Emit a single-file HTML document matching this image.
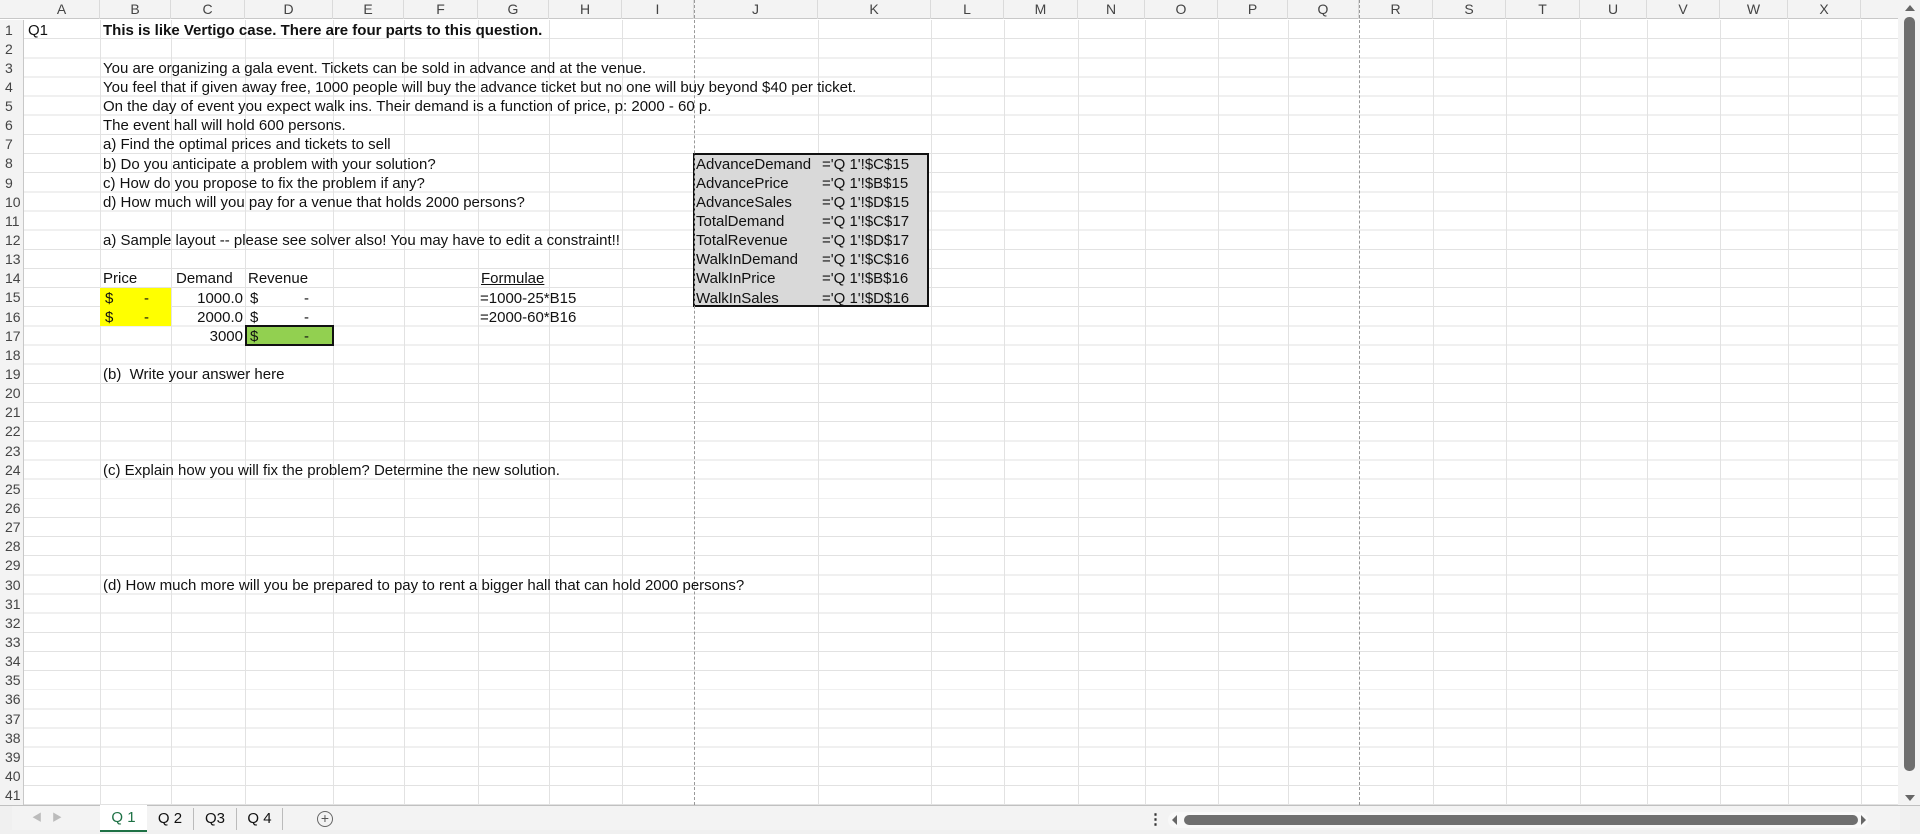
<!DOCTYPE html>
<html><head><meta charset="utf-8"><style>
*{margin:0;padding:0;box-sizing:border-box}
body{width:1920px;height:834px;overflow:hidden;background:#fff;font-family:"Liberation Sans","Noto Sans CJK SC",sans-serif;font-size:15px;color:#111;position:relative}
.hdr{position:absolute;top:0;left:0;width:1898px;height:19px;background:#f3f3f3;border-bottom:1px solid #c8c8c8}
.ch{position:absolute;top:0;height:19px;line-height:19px;text-align:center;color:#444;font-size:14px;border-right:1px solid #dadada}
.rh{position:absolute;left:0;width:24px;background:#f3f3f3;border-right:1px solid #c8c8c8;top:19.5px;height:785.2px}
.rh div{height:19.15px;line-height:20px;color:#444;font-size:14px;padding-left:5px}
.grid{position:absolute;left:24px;top:19.5px;width:1874px;height:785.2px;background:repeating-linear-gradient(to bottom,transparent 0,transparent 18.15px,#e2e2e2 18.15px,#e2e2e2 19.15px)}
.vl{position:absolute;top:19.5px;height:785px;width:1px;background:#e2e2e2}
.t{position:absolute;height:19.15px;line-height:21px;white-space:nowrap}
.dash{position:absolute;top:0;height:805px;width:0;border-left:1px dashed #999}
</style></head><body>
<div class="grid"></div>
<div class="vl" style="left:100px"></div><div class="vl" style="left:171px"></div><div class="vl" style="left:245px"></div><div class="vl" style="left:333px"></div><div class="vl" style="left:404px"></div><div class="vl" style="left:478px"></div><div class="vl" style="left:549px"></div><div class="vl" style="left:622px"></div><div class="vl" style="left:818px"></div><div class="vl" style="left:931px"></div><div class="vl" style="left:1004px"></div><div class="vl" style="left:1078px"></div><div class="vl" style="left:1145px"></div><div class="vl" style="left:1218px"></div><div class="vl" style="left:1288px"></div><div class="vl" style="left:1433px"></div><div class="vl" style="left:1506px"></div><div class="vl" style="left:1580px"></div><div class="vl" style="left:1647px"></div><div class="vl" style="left:1720px"></div><div class="vl" style="left:1788px"></div><div class="vl" style="left:1861px"></div>
<div class="hdr">
<div class="ch" style="left:24px;width:76px">A</div><div class="ch" style="left:100px;width:71px">B</div><div class="ch" style="left:171px;width:74px">C</div><div class="ch" style="left:245px;width:88px">D</div><div class="ch" style="left:333px;width:71px">E</div><div class="ch" style="left:404px;width:74px">F</div><div class="ch" style="left:478px;width:71px">G</div><div class="ch" style="left:549px;width:73px">H</div><div class="ch" style="left:622px;width:72px">I</div><div class="ch" style="left:694px;width:124px">J</div><div class="ch" style="left:818px;width:113px">K</div><div class="ch" style="left:931px;width:73px">L</div><div class="ch" style="left:1004px;width:74px">M</div><div class="ch" style="left:1078px;width:67px">N</div><div class="ch" style="left:1145px;width:73px">O</div><div class="ch" style="left:1218px;width:70px">P</div><div class="ch" style="left:1288px;width:71px">Q</div><div class="ch" style="left:1359px;width:74px">R</div><div class="ch" style="left:1433px;width:73px">S</div><div class="ch" style="left:1506px;width:74px">T</div><div class="ch" style="left:1580px;width:67px">U</div><div class="ch" style="left:1647px;width:73px">V</div><div class="ch" style="left:1720px;width:68px">W</div><div class="ch" style="left:1788px;width:73px">X</div><div class="ch" style="left:1861px;width:37px;border:0"></div>
</div>
<div class="rh"><div>1</div><div>2</div><div>3</div><div>4</div><div>5</div><div>6</div><div>7</div><div>8</div><div>9</div><div>10</div><div>11</div><div>12</div><div>13</div><div>14</div><div>15</div><div>16</div><div>17</div><div>18</div><div>19</div><div>20</div><div>21</div><div>22</div><div>23</div><div>24</div><div>25</div><div>26</div><div>27</div><div>28</div><div>29</div><div>30</div><div>31</div><div>32</div><div>33</div><div>34</div><div>35</div><div>36</div><div>37</div><div>38</div><div>39</div><div>40</div><div>41</div></div>

<div style="position:absolute;left:100px;top:287.6px;width:71px;height:38.3px;background:#ffff00"></div>
<div style="position:absolute;left:245px;top:324.9px;width:89px;height:21px;background:#92d050;border:2px solid #111"></div>
<div style="position:absolute;left:693px;top:152.5px;width:236px;height:154.8px;background:#d9d9d9;border:2px solid #111"></div>

<div class="dash" style="left:694px"></div>
<div class="dash" style="left:1359px"></div>

<div class="t" style="left:28px;top:19.5px">Q1</div>
<div class="t" style="left:103px;top:19.5px;font-weight:bold">This is like Vertigo case. There are four parts to this question.</div>
<div class="t" style="left:103px;top:57.8px">You are organizing a gala event. Tickets can be sold in advance and at the venue.</div>
<div class="t" style="left:103px;top:76.95px">You feel that if given away free, 1000 people will buy the advance ticket but no one will buy beyond $40 per ticket.</div>
<div class="t" style="left:103px;top:96.1px">On the day of event you expect walk ins. Their demand is a function of price, p: 2000 - 60 p.</div>
<div class="t" style="left:103px;top:115.25px">The event hall will hold 600 persons.</div>
<div class="t" style="left:103px;top:134.4px">a) Find the optimal prices and tickets to sell</div>
<div class="t" style="left:103px;top:153.55px">b) Do you anticipate a problem with your solution?</div>
<div class="t" style="left:103px;top:172.7px">c) How do you propose to fix the problem if any?</div>
<div class="t" style="left:103px;top:191.85px">d) How much will you pay for a venue that holds 2000 persons?</div>
<div class="t" style="left:103px;top:230.15px">a) Sample layout -- please see solver also! You may have to edit a constraint!!</div>
<div class="t" style="left:103px;top:268.45px">Price</div>
<div class="t" style="left:176px;top:268.45px">Demand</div>
<div class="t" style="left:248px;top:268.45px">Revenue</div>
<div class="t" style="left:481px;top:268.45px;text-decoration:underline">Formulae</div>
<div class="t" style="left:105px;top:287.6px">$</div><div class="t" style="left:144px;top:287.6px">-</div>
<div class="t" style="left:105px;top:306.75px">$</div><div class="t" style="left:144px;top:306.75px">-</div>
<div class="t" style="left:171px;width:72px;text-align:right;top:287.6px">1000.0</div>
<div class="t" style="left:171px;width:72px;text-align:right;top:306.75px">2000.0</div>
<div class="t" style="left:171px;width:72px;text-align:right;top:325.9px">3000</div>
<div class="t" style="left:250px;top:287.6px">$</div><div class="t" style="left:304px;top:287.6px">-</div>
<div class="t" style="left:250px;top:306.75px">$</div><div class="t" style="left:304px;top:306.75px">-</div>
<div class="t" style="left:250px;top:325.9px">$</div><div class="t" style="left:304px;top:325.9px">-</div>
<div class="t" style="left:480px;top:287.6px">=1000-25*B15</div>
<div class="t" style="left:480px;top:306.75px">=2000-60*B16</div>
<div class="t" style="left:103px;top:364.2px">(b)&nbsp; Write your answer here</div>
<div class="t" style="left:103px;top:459.95px">(c) Explain how you will fix the problem? Determine the new solution.</div>
<div class="t" style="left:103px;top:574.85px">(d) How much more will you be prepared to pay to rent a bigger hall that can hold 2000 persons?</div>

<div class="t" style="left:696px;top:153.55px">AdvanceDemand</div><div class="t" style="left:822px;top:153.55px">='Q 1'!$C$15</div>
<div class="t" style="left:696px;top:172.7px">AdvancePrice</div><div class="t" style="left:822px;top:172.7px">='Q 1'!$B$15</div>
<div class="t" style="left:696px;top:191.85px">AdvanceSales</div><div class="t" style="left:822px;top:191.85px">='Q 1'!$D$15</div>
<div class="t" style="left:696px;top:211px">TotalDemand</div><div class="t" style="left:822px;top:211px">='Q 1'!$C$17</div>
<div class="t" style="left:696px;top:230.15px">TotalRevenue</div><div class="t" style="left:822px;top:230.15px">='Q 1'!$D$17</div>
<div class="t" style="left:696px;top:249.3px">WalkInDemand</div><div class="t" style="left:822px;top:249.3px">='Q 1'!$C$16</div>
<div class="t" style="left:696px;top:268.45px">WalkInPrice</div><div class="t" style="left:822px;top:268.45px">='Q 1'!$B$16</div>
<div class="t" style="left:696px;top:287.6px">WalkInSales</div><div class="t" style="left:822px;top:287.6px">='Q 1'!$D$16</div>

<div style="position:absolute;left:1898px;top:0;width:22px;height:805px;background:#f3f3f3"></div>
<div style="position:absolute;left:1905px;top:5px;width:0;height:0;border-left:5px solid transparent;border-right:5px solid transparent;border-bottom:6px solid #666"></div>
<div style="position:absolute;left:1904px;top:17px;width:11px;height:754px;background:#6e6e6e;border-radius:5px"></div>
<div style="position:absolute;left:1905px;top:795px;width:0;height:0;border-left:5px solid transparent;border-right:5px solid transparent;border-top:6px solid #666"></div>

<div style="position:absolute;left:0;top:805px;width:1920px;height:29px;background:#f0f0f0;border-top:1px solid #c0c0c0"></div>
<div style="position:absolute;left:12px;top:806px;width:1888px;height:24px;background:#f3f3f3"></div>
<div class="t" style="left:32px;top:808px;color:#bbb;font-size:10px">◀</div>
<div class="t" style="left:52px;top:808px;color:#bbb;font-size:10px">▶</div>
<div style="position:absolute;left:100px;top:805px;width:47px;height:27px;background:#fff;border-bottom:2px solid #1e7145;text-align:center;line-height:26px;color:#1e7145;font-size:15px">Q 1</div>
<div style="position:absolute;left:147px;top:808px;width:47px;height:22px;text-align:center;line-height:22px;font-size:15px;border-right:1px solid #bbb">Q 2</div>
<div style="position:absolute;left:194px;top:808px;width:43px;height:22px;text-align:center;line-height:22px;font-size:15px;border-right:1px solid #bbb">Q3</div>
<div style="position:absolute;left:237px;top:808px;width:46px;height:22px;text-align:center;line-height:22px;font-size:15px;border-right:1px solid #bbb">Q 4</div>
<div style="position:absolute;left:317px;top:811px;width:16px;height:16px;border:1px solid #666;border-radius:50%;text-align:center;line-height:13px;font-size:14px;color:#555">+</div>
<div class="t" style="left:1148px;top:809px;color:#333;font-weight:bold">⋮</div>
<div style="position:absolute;left:1168px;top:812px;width:700px;height:16px;background:#f8f8f8;border-radius:8px"></div>
<div style="position:absolute;left:1172px;top:815px;width:0;height:0;border-top:5px solid transparent;border-bottom:5px solid transparent;border-right:5px solid #666"></div>
<div style="position:absolute;left:1184px;top:815px;width:674px;height:10px;background:#6e6e6e;border-radius:5px"></div>
<div style="position:absolute;left:1861px;top:815px;width:0;height:0;border-top:5px solid transparent;border-bottom:5px solid transparent;border-left:5px solid #666"></div>
</body></html>
